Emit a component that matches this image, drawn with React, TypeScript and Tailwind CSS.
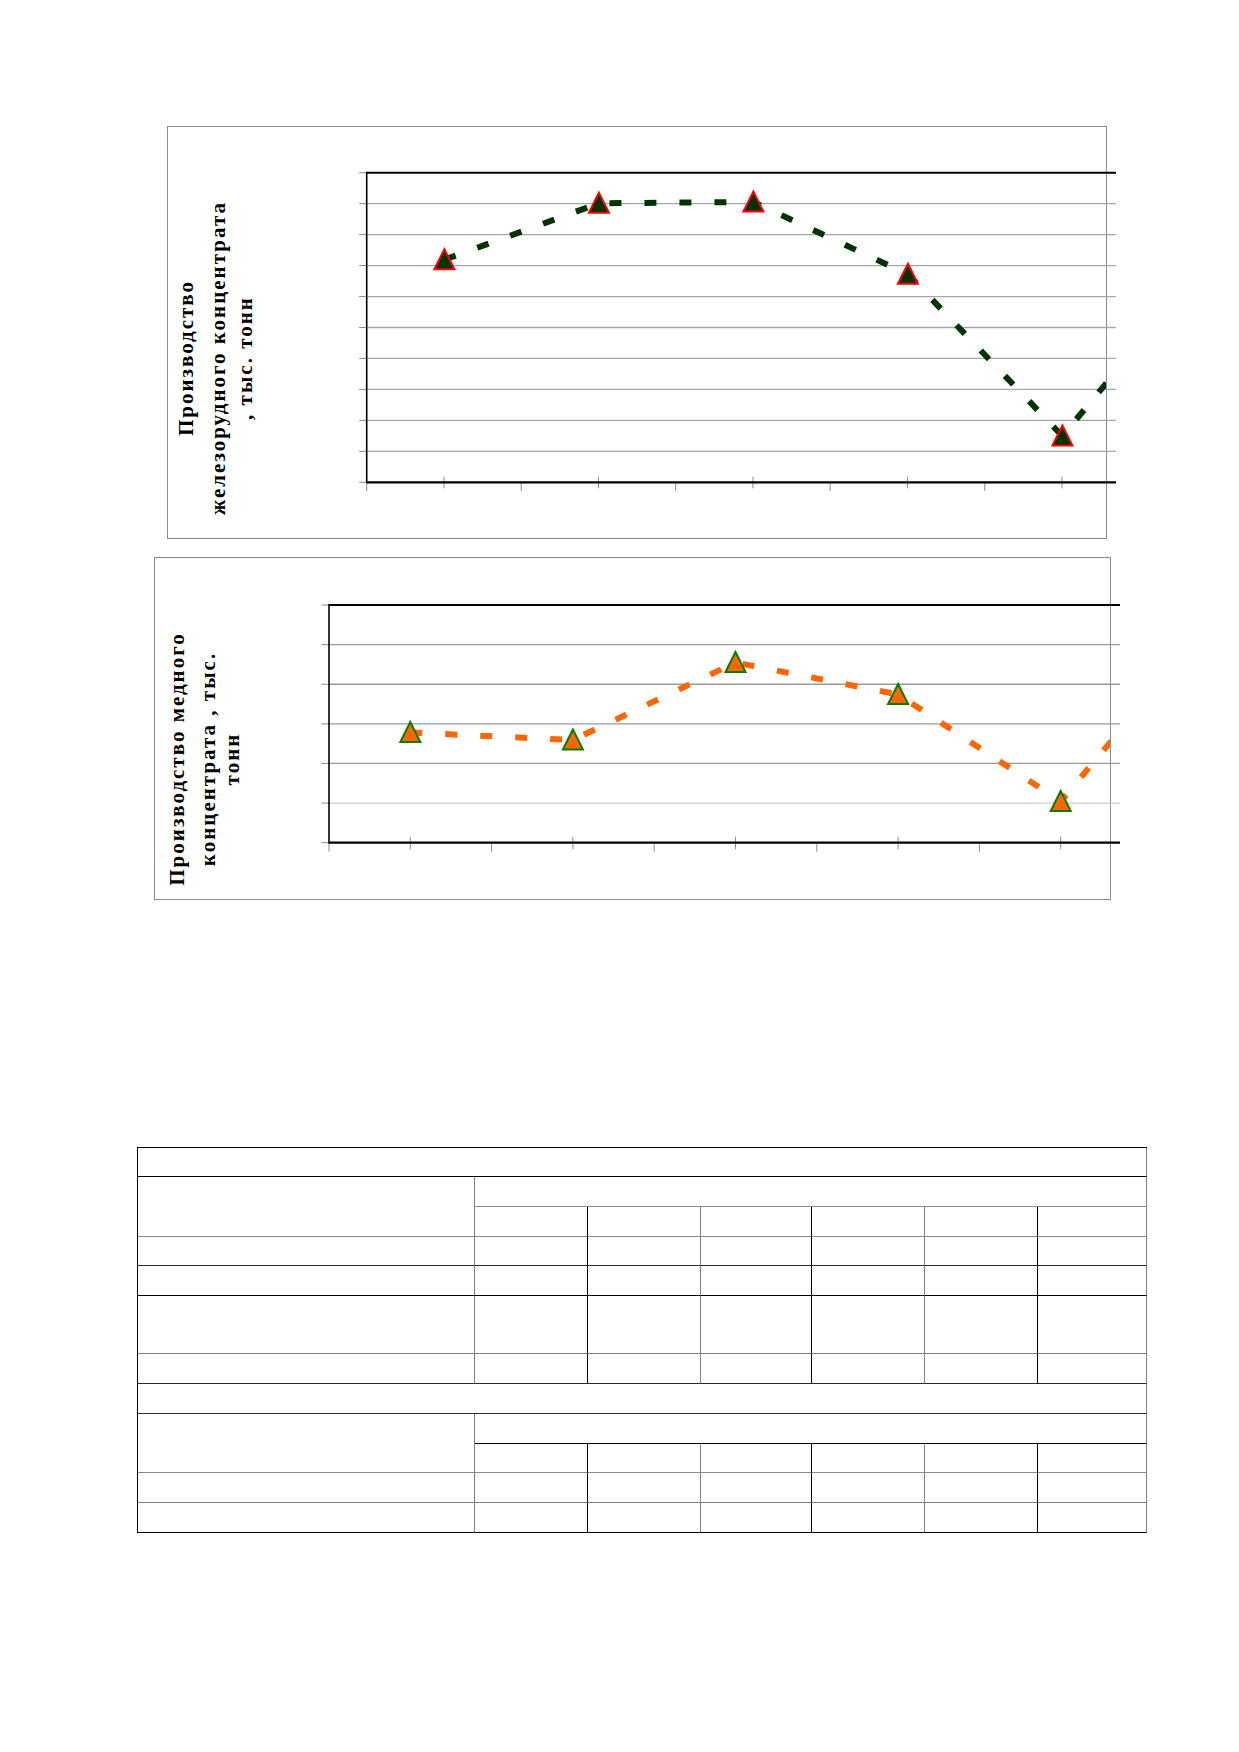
import React from "react";

type Title = { text: string; baseline: number };

type ChartSpec = {
  frame: { x: number; y: number; w: number; h: number };
  box: string;
  axisX: number;
  top: number;
  bottom: number;
  grids: number;
  right: number;
  first: number;
  step: number;
  ys: number[];
  line: string;
  fill: string;
  stroke: string;
  gridColors: string[];
  dataTick: [number, number];
  minorTick: [number, number];
  titles: Title[];
  titleCenter: number;
};

const iron: ChartSpec = {
  frame: { x: 167, y: 126, w: 940, h: 413 },
  box: "ml-[167px] w-[940px] h-[413px]",
  axisX: 366.7,
  top: 172.7,
  bottom: 482.3,
  grids: 10,
  right: 1116,
  first: 444.4,
  step: 154.5,
  ys: [259.7, 203.3, 202, 274.3, 436, 250],
  line: "#003300",
  fill: "#003300",
  stroke: "#ff0000",
  gridColors: Array(10).fill("#a6a6a6"),
  dataTick: [476.7, 488.3],
  minorTick: [482, 491],
  titles: [
    { text: "Производство", baseline: 193 },
    { text: "железорудного концентрата", baseline: 225 },
    { text: ", тыс. тонн", baseline: 252 },
  ],
  titleCenter: 358,
};

const copper: ChartSpec = {
  frame: { x: 154, y: 557, w: 957, h: 343 },
  box: "ml-[154px] mt-[18px] w-[957px] h-[343px]",
  axisX: 329,
  top: 605,
  bottom: 842.7,
  grids: 6,
  right: 1120,
  first: 410.3,
  step: 162.6,
  ys: [732.5, 740, 662.5, 694.5, 801.5, 607],
  line: "#ff6600",
  fill: "#ff6600",
  stroke: "#008000",
  gridColors: ["#999999", "#999999", "#999999", "#999999", "#cccccc", "#cccccc"],
  dataTick: [836.7, 849.3],
  minorTick: [844, 851.7],
  titles: [
    { text: "Производство медного", baseline: 184 },
    { text: "концентрата , тыс.", baseline: 215 },
    { text: "тонн", baseline: 239 },
  ],
  titleCenter: 759,
};

function Chart({ spec, id }: { spec: ChartSpec; id: string }) {
  const ox = spec.frame.x + 1;
  const oy = spec.frame.y + 1;
  const innerW = spec.frame.w - 2;
  const innerH = spec.frame.h - 2;
  const X = (v: number) => v - ox;
  const Y = (v: number) => v - oy;
  const gap = (spec.bottom - spec.top) / spec.grids;
  const half = spec.step / 2;
  const xs = spec.ys.map((_, i) => spec.first + i * spec.step);
  const pts = xs.map((x, i) => `${X(x)},${Y(spec.ys[i])}`).join(" ");

  const minor: number[] = [];
  for (let x = spec.axisX; x < spec.right; x += half) minor.push(x);

  return (
    <div className={`border border-[#8c8c8c] bg-white ${spec.box}`}>
      <svg width={innerW} height={innerH} className="block overflow-visible">
        <defs>
          <clipPath id={id}>
            <rect x={X(spec.axisX)} y={0} width={innerW - X(spec.axisX)} height={innerH} />
          </clipPath>
        </defs>

        {spec.titles.map((t) => (
          <text
            key={t.text}
            transform={`translate(${X(t.baseline)},${Y(spec.titleCenter)}) rotate(-90)`}
            textAnchor="middle"
            fontFamily="'Liberation Serif', 'Times New Roman', serif"
            fontWeight="bold"
            fontSize={21}
            letterSpacing={2}
            fill="#000"
          >
            {t.text}
          </text>
        ))}

        {/* gridlines */}
        {Array.from({ length: spec.grids - 1 }, (_, i) => {
          const y = Y(spec.top + (i + 1) * gap);
          return (
            <line
              key={i}
              x1={X(spec.axisX)}
              x2={X(spec.right)}
              y1={y}
              y2={y}
              stroke={spec.gridColors[i]}
              strokeWidth={1.3}
            />
          );
        })}

        {/* value axis ticks */}
        {Array.from({ length: spec.grids + 1 }, (_, i) => {
          const y = Y(spec.top + i * gap);
          return (
            <line
              key={i}
              x1={X(spec.axisX - 7.5)}
              x2={X(spec.axisX)}
              y1={y}
              y2={y}
              stroke="#8c8c8c"
              strokeWidth={1}
            />
          );
        })}

        {/* category ticks */}
        {minor.map((x, i) => {
          const data = i % 2 === 1;
          const [a, b] = data ? spec.dataTick : spec.minorTick;
          return (
            <line
              key={i}
              x1={X(x)}
              x2={X(x)}
              y1={Y(a)}
              y2={Y(b)}
              stroke="#8c8c8c"
              strokeWidth={1}
            />
          );
        })}

        <line
          x1={X(spec.axisX)}
          x2={X(spec.right)}
          y1={Y(spec.top)}
          y2={Y(spec.top)}
          stroke="#000"
          strokeWidth={2}
        />
        <line
          x1={X(spec.axisX)}
          x2={X(spec.right)}
          y1={Y(spec.bottom)}
          y2={Y(spec.bottom)}
          stroke="#000"
          strokeWidth={2.2}
        />
        <line
          x1={X(spec.axisX)}
          x2={X(spec.axisX)}
          y1={Y(spec.top) - 1}
          y2={Y(spec.bottom) + 1}
          stroke="#000"
          strokeWidth={1.6}
        />

        <g clipPath={`url(#${id})`}>
          <polyline
            points={pts}
            fill="none"
            stroke={spec.line}
            strokeWidth={6}
            strokeDasharray="12 23"
            strokeLinecap="butt"
            strokeLinejoin="miter"
          />
          {xs.slice(0, 5).map((x, i) => {
            const cx = X(x);
            const cy = Y(spec.ys[i]);
            return (
              <polygon
                key={i}
                points={`${cx},${cy - 10.5} ${cx - 10},${cy + 9.5} ${cx + 10},${cy + 9.5}`}
                fill={spec.fill}
                stroke={spec.stroke}
                strokeWidth={2}
              />
            );
          })}
        </g>
      </svg>
    </div>
  );
}

// column widths and the colour of each column's right-hand rule
const colW = ["w-[337px]", "w-[113px]", "w-[113px]", "w-[111px]", "w-[113px]", "w-[113px]", "w-[109px]"];
const colLine = [
  "border-r-[#7f7f7f]",
  "border-r-black",
  "border-r-[#7f7f7f]",
  "border-r-black",
  "border-r-[#7f7f7f]",
  "border-r-black",
  "border-r-[#7f7f7f]",
];

// row height (incl. its bottom rule) and the colour of that rule
const rows = [
  { h: "h-[29px]", line: "border-b-black" },
  { h: "h-[30px]", line: "border-b-[#8a8a8a]" },
  { h: "h-[30px]", line: "border-b-[#8a8a8a]" },
  { h: "h-[29px]", line: "border-b-[#2b2b2b]" },
  { h: "h-[30px]", line: "border-b-black" },
  { h: "h-[58px]", line: "border-b-[#7f7f7f]" },
  { h: "h-[30px]", line: "border-b-[#2b2b2b]" },
  { h: "h-[30px]", line: "border-b-[#2b2b2b]" },
  { h: "h-[30px]", line: "border-b-black" },
  { h: "h-[29px]", line: "border-b-[#8a8a8a]" },
  { h: "h-[30px]", line: "border-b-[#7f7f7f]" },
  { h: "h-[30px]", line: "border-b-black" },
];

function Cell({
  col,
  row,
  colSpan,
  rowSpan,
}: {
  col: number;
  row: number;
  colSpan?: number;
  rowSpan?: number;
}) {
  const lastCol = col + (colSpan ?? 1) - 1;
  const lastRow = row + (rowSpan ?? 1) - 1;
  return (
    <td
      colSpan={colSpan}
      rowSpan={rowSpan}
      className={`border-r border-b p-0 ${colLine[lastCol]} ${rows[lastRow].line}`}
    />
  );
}

function FullRow({ row }: { row: number }) {
  return (
    <tr className={rows[row].h}>
      <Cell col={0} row={row} colSpan={7} />
    </tr>
  );
}

function HeaderRows({ row }: { row: number }) {
  return (
    <>
      <tr className={rows[row].h}>
        <Cell col={0} row={row} rowSpan={2} />
        <Cell col={1} row={row} colSpan={6} />
      </tr>
      <tr className={rows[row + 1].h}>
        {colW.slice(1).map((_, c) => (
          <Cell key={c} col={c + 1} row={row + 1} />
        ))}
      </tr>
    </>
  );
}

function ValueRow({ row }: { row: number }) {
  return (
    <tr className={rows[row].h}>
      {colW.map((_, c) => (
        <Cell key={c} col={c} row={row} />
      ))}
    </tr>
  );
}

function DataTable() {
  return (
    <table className="ml-[137px] mt-[247px] w-[1009px] table-fixed border-separate border-spacing-0 border-l border-t border-l-black border-t-black">
      <colgroup>
        {colW.map((w, i) => (
          <col key={i} className={w} />
        ))}
      </colgroup>
      <tbody>
        <FullRow row={0} />
        <HeaderRows row={1} />
        <ValueRow row={3} />
        <ValueRow row={4} />
        <ValueRow row={5} />
        <ValueRow row={6} />
        <FullRow row={7} />
        <HeaderRows row={8} />
        <ValueRow row={10} />
        <ValueRow row={11} />
      </tbody>
    </table>
  );
}

export default function App() {
  return (
    <div className="w-[1239px] min-h-[1752px] bg-white pt-[126px]">
      <Chart spec={iron} id="clip-iron" />
      <Chart spec={copper} id="clip-copper" />
      <DataTable />
    </div>
  );
}
